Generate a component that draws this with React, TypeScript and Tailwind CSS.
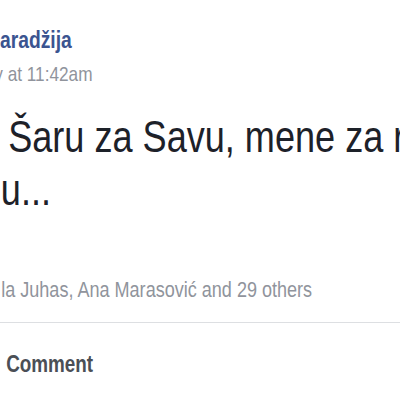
import React from "react";

export default function App() {
  return (
    <div
      className="w-[400px] h-[400px] overflow-hidden bg-white"
      style={{ fontFamily: '"Liberation Sans", Arial, sans-serif' }}
    >
      <div className="w-[488px] origin-left scale-x-[0.82] flex flex-col">
        <div className="pt-[28px] pl-0 text-[23.5px] leading-[24px] font-bold text-[#3b5490] whitespace-nowrap">
          aradžija
        </div>
        <div className="mt-[11px] -ml-[7px] text-[21px] leading-[22px] text-[#90949c] whitespace-nowrap">
          y at 11:42am
        </div>
        <div className="mt-[25px] text-[44px] leading-[53px] text-[#1d2129]">
          <div className="pl-[10px] whitespace-nowrap">Šaru za Savu, mene za reku</div>
          <div className="pl-[1px] whitespace-nowrap">u...</div>
        </div>
        <div className="mt-[62px] pl-[1.5px] text-[22px] leading-[24px] text-[#90949c] whitespace-nowrap">
          la Juhas, Ana Marasović and 29 others
        </div>
        <div className="mt-[20px] h-[1px] bg-[#dddfe2]" />
        <div className="mt-[29px] pl-[7.5px] text-[23px] leading-[24px] font-bold text-[#4b4f56] whitespace-nowrap">
          Comment
        </div>
      </div>
    </div>
  );
}
